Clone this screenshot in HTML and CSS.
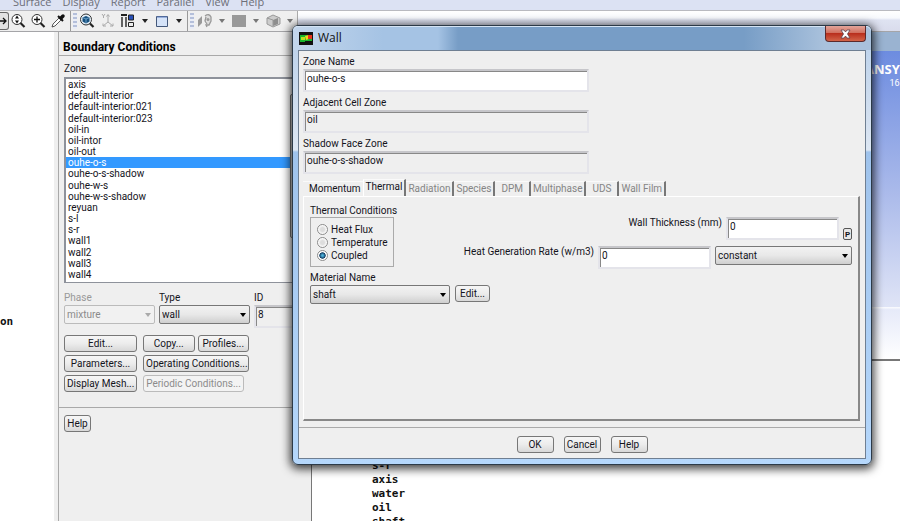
FILE: index.html
```html
<!DOCTYPE html>
<html lang="en">
<head>
    <meta charset="UTF-8">
    <meta name="viewport" content="width=device-width, initial-scale=1.0">
    <title>Boundary Conditions</title>
    <link rel="stylesheet" href="styles.css">
</head>
<body>
    <nav class="menubar">
        <a href="#">Surface</a>
        <a href="#">Display</a>
        <a href="#">Report</a>
        <a href="#">Parallel</a>
        <a href="#">View</a>
        <a href="#">Help</a>
    </nav>

    <div class="toolbar-row">
        <div class="toolbar">
            <button class="tool pan" aria-label="Pan">
                <svg width="8" height="18" viewBox="0 0 8 18"><path d="M0 9h5M3 6l3 3-3 3" fill="none" stroke="#111" stroke-width="1.3"/></svg>
            </button>
            <button class="tool" aria-label="Zoom">
                <svg width="18" height="18" viewBox="0 0 18 18"><circle cx="7" cy="7.500" r="5" fill="#fff" stroke="#333"/><path d="M10.500 11l4 4" stroke="#222" stroke-width="2.200"/><path d="M7 3.500l2 3H5zM7 11.500l2-3H5z" fill="#111"/></svg>
            </button>
            <button class="tool" aria-label="Zoom in">
                <svg width="18" height="18" viewBox="0 0 18 18"><circle cx="7" cy="7.500" r="5" fill="#fff" stroke="#333"/><path d="M10.500 11l4 4" stroke="#222" stroke-width="2.200"/><path d="M4 7.500h6M7 4.500v6" stroke="#111" stroke-width="1.300"/></svg>
            </button>
            <button class="tool" aria-label="Probe">
                <svg width="18" height="18" viewBox="0 0 18 18"><path d="M2 15l1-3 6-6 2 2-6 6z" fill="#fff" stroke="#444" stroke-width=".9"/><path d="M8 4l5 5" stroke="#111" stroke-width="2"/><path d="M11 6l2-2" stroke="#111" stroke-width="3.500" stroke-linecap="round"/></svg>
            </button>
            <span class="sep"></span>
            <span class="grip"></span>
            <button class="tool" aria-label="Fit to window">
                <svg width="18" height="18" viewBox="0 0 18 18"><circle cx="7" cy="7.500" r="5.500" fill="#e4eef6" stroke="#333"/><path d="M11 11.500l3.500 3.500" stroke="#222" stroke-width="2.200"/><path d="M3.500 5.500L7 4l3.500 1.500v4L7 11.500l-3.500-2z" fill="#16507f"/><path d="M3.500 5.500L7 7l3.500-1.500M7 7v4" fill="none" stroke="#8ec3e8" stroke-width=".7"/></svg>
            </button>
            <button class="tool" aria-label="Axes" disabled>
                <svg width="18" height="18" viewBox="0 0 18 18"><path d="M9 10V3M9 10l-5 4M9 10l5 4M7.500 4.500L9 2.500l1.500 2M4 11.500V14h3M14 11.500V14h-3M3 2l1.500 2L6 2M4.500 4v2" fill="none" stroke="#aaa"/></svg>
            </button>
            <button class="tool" aria-label="Layout">
                <svg width="18" height="18" viewBox="0 0 18 18"><path d="M2 3h6" stroke="#222" stroke-width="2"/><path d="M3 5v10M7 5v10" stroke="#333" stroke-width="1.500"/><path d="M9.500 3h5v5h-5z" fill="#2850b8" stroke="#222"/><path d="M9.500 10.500h5v4h-5z" fill="#eee" stroke="#222"/></svg>
            </button>
            <span class="caret"></span>
            <button class="tool" aria-label="Windows">
                <svg width="18" height="18" viewBox="0 0 18 18"><path d="M3.500 4.500h11v10h-11z" fill="#d5e3f8" stroke="#44587a"/><path d="M4 5h10" stroke="#5c7dbd"/></svg>
            </button>
            <span class="caret"></span>
            <span class="sep"></span>
            <span class="grip"></span>
            <button class="tool" aria-label="Render" disabled>
                <svg width="18" height="18" viewBox="0 0 18 18"><path d="M2 8l4-4v7l-4 4z" fill="#999"/><path d="M9 4q4-3 6 1v4l-2 4h-3l1 2M10 5l-1 4 2 3" fill="#ddd" stroke="#999" stroke-width="1.300"/><circle cx="12" cy="7.500" r="1.500" fill="#999"/></svg>
            </button>
            <span class="caret dim"></span>
            <button class="tool" aria-label="Colour" disabled>
                <svg width="18" height="18" viewBox="0 0 18 18"><path d="M2 3h14v12H2z" fill="#999"/></svg>
            </button>
            <span class="caret dim"></span>
            <button class="tool" aria-label="Cube" disabled>
                <svg width="18" height="18" viewBox="0 0 18 18"><path d="M3 6l6-3 7 3v6l-7 3-6-3z" fill="#ccc" stroke="#999"/><path d="M9 8l5-2v6l-5 2z" fill="#8e8e8e"/><path d="M3 6l6 2v6" fill="none" stroke="#999"/></svg>
            </button>
            <span class="caret dim"></span>
        </div>
        <div class="toolbar-rest"></div>
    </div>

    <div class="workspace">
        <aside class="tree">on</aside>

        <section class="panel">
            <h1>Boundary Conditions</h1>
            <div class="panel-body">
                <div class="caption" id="zone-label">Zone</div>
                <div class="listbox">
                    <ul role="listbox" aria-labelledby="zone-label">
                        <li>axis</li>
                        <li>default-interior</li>
                        <li>default-interior:021</li>
                        <li>default-interior:023</li>
                        <li>oil-in</li>
                        <li>oil-intor</li>
                        <li>oil-out</li>
                        <li class="selected">ouhe-o-s</li>
                        <li>ouhe-o-s-shadow</li>
                        <li>ouhe-w-s</li>
                        <li>ouhe-w-s-shadow</li>
                        <li>reyuan</li>
                        <li>s-l</li>
                        <li>s-r</li>
                        <li>wall1</li>
                        <li>wall2</li>
                        <li>wall3</li>
                        <li>wall4</li>
                    </ul>
                    <div class="scrollbar"><div class="thumb"></div></div>
                </div>

                <div class="type-row">
                    <div class="field">
                        <label class="muted" for="phase">Phase</label>
                        <div class="select"><select id="phase" disabled><option>mixture</option></select></div>
                    </div>
                    <div class="field">
                        <label for="type">Type</label>
                        <div class="select"><select id="type"><option>wall</option></select></div>
                    </div>
                    <div class="field">
                        <label for="zone-id">ID</label>
                        <input id="zone-id" type="text" value="8" readonly>
                    </div>
                </div>

                <div class="actions">
                    <button class="btn">Edit...</button>
                    <div class="pair">
                        <button class="btn">Copy...</button>
                        <button class="btn">Profiles...</button>
                    </div>
                    <button class="btn">Parameters...</button>
                    <button class="btn">Operating Conditions...</button>
                    <button class="btn">Display Mesh...</button>
                    <button class="btn periodic" disabled>Periodic Conditions...</button>
                </div>
            </div>
            <div class="panel-foot">
                <button class="btn">Help</button>
            </div>
        </section>

        <main class="output">
            <div class="graphics">
                <div class="graphics-title"></div>
                <div class="viewport">
                    <div class="brand"><b>ANSYS</b><span>16.0</span></div>
                </div>
            </div>
            <pre class="console">s-r
axis
water
oil
shaft</pre>
        </main>
    </div>

    <div class="dialog" role="dialog" aria-labelledby="dialog-title">
        <header class="titlebar">
            <svg class="app-icon" width="14" height="13" viewBox="0 0 14 13"><path d="M0 0h14v13H0z" fill="#111"/><path d="M1 3h12v7H1z" fill="#19b52c"/><path d="M2 5h4v3H2z" fill="#b8e020"/><path d="M6 4l4-1v4l-3 1z" fill="#f0d818"/><path d="M9 3h4v4H9z" fill="#e8351c"/><path d="M6 9h7v1H6z" fill="#111"/></svg>
            <h2 id="dialog-title">Wall</h2>
            <button class="close" aria-label="Close">
                <svg width="11" height="10" viewBox="0 0 11 10"><path d="M1 1h3l1.500 2L7 1h3L7.500 5 10 9H7L5.500 7 4 9H1l2.500-4z" fill="#fff" stroke="#5a4450" stroke-width=".8"/></svg>
            </button>
        </header>

        <div class="dialog-body">
            <div class="names">
                <label for="zone-name">Zone Name</label>
                <input id="zone-name" type="text" value="ouhe-o-s">
                <label for="adjacent">Adjacent Cell Zone</label>
                <input id="adjacent" type="text" value="oil" readonly>
                <label for="shadow">Shadow Face Zone</label>
                <input id="shadow" type="text" value="ouhe-o-s-shadow" readonly>
            </div>

            <div class="tabs" role="tablist">
                <button role="tab">Momentum</button>
                <button role="tab" class="active">Thermal</button>
                <button role="tab" disabled>Radiation</button>
                <button role="tab" disabled>Species</button>
                <button role="tab" class="wide" disabled>DPM</button>
                <button role="tab" disabled>Multiphase</button>
                <button role="tab" class="wide" disabled>UDS</button>
                <button role="tab" disabled>Wall Film</button>
            </div>

            <div class="tab-page">
                <div class="thermal">
                    <fieldset>
                        <legend>Thermal Conditions</legend>
                        <div class="radios">
                            <label><input type="radio" name="thermal">Heat Flux</label>
                            <label><input type="radio" name="thermal">Temperature</label>
                            <label><input type="radio" name="thermal" checked>Coupled</label>
                        </div>
                    </fieldset>
                    <div class="values">
                        <div class="value-row">
                            <label for="thickness">Wall Thickness (mm)</label>
                            <input id="thickness" type="text" value="0">
                            <button class="param" aria-label="Parameter">P</button>
                        </div>
                        <div class="value-row">
                            <label for="heat-rate">Heat Generation Rate (w/m3)</label>
                            <input id="heat-rate" type="text" value="0">
                            <div class="select"><select aria-label="Profile"><option>constant</option></select></div>
                        </div>
                    </div>
                </div>
                <label class="material-label" for="material">Material Name</label>
                <div class="material">
                    <div class="select"><select id="material"><option>shaft</option></select></div>
                    <button class="btn">Edit...</button>
                </div>
            </div>

            <footer>
                <button class="btn">OK</button>
                <button class="btn">Cancel</button>
                <button class="btn">Help</button>
            </footer>
        </div>
    </div>
</body>
</html>
```

FILE: styles.css
```css
* {
    margin: 0;
    padding: 0;
    box-sizing: border-box;
}

body {
    font: 10px/12px Roboto, "DejaVu Sans Condensed", sans-serif;
    color: #14141c;
    background: #efefef;
    height: 100vh;
    display: flex;
    flex-direction: column;
    overflow: hidden;
    position: relative;
}

button,
input,
select {
    font: inherit;
    color: inherit;
}

/* menu and toolbar */
.menubar {
    height: 11px;
    flex: none;
    display: flex;
    align-items: flex-end;
    gap: 11px;
    padding-left: 13px;
    background: #dce2f3;
    border-bottom: 1px solid #b9bac0;
}

.menubar a {
    font: 11px/16px "Open Sans", sans-serif;
    color: #6d6f78;
    text-decoration: none;
}

.toolbar-row {
    display: flex;
    flex: none;
    height: 21px;
    border-bottom: 1px solid #a5a5a8;
}

.toolbar {
    display: flex;
    align-items: center;
    border-right: 1px solid #aaa;
}

.toolbar-rest {
    flex: 1;
    background: linear-gradient(#fff 0, #f7f9fd 7px, #dfe3f2 9px, #d9dcec 100%);
}

.tool {
    width: 20px;
    height: 18px;
    border: none;
    background: none;
    display: flex;
    align-items: center;
    justify-content: center;
}

.pan {
    width: 9px;
    border: 1px solid #666;
    border-left: none;
    border-radius: 0 3px 3px 0;
    background: #e2e2e2;
}

.sep {
    width: 1px;
    height: 20px;
    margin: 0 2px 0 1px;
    background: #999;
}

.grip {
    width: 4px;
    height: 16px;
    margin-right: 1px;
    background: repeating-linear-gradient(#b4bfda 0 2px, #e8ecf6 2px 4px);
}

.caret {
    width: 14px;
    display: flex;
    justify-content: center;
}

.caret::after {
    content: "";
    border: 3px solid transparent;
    border-top: 4px solid #222;
    border-bottom: none;
}

.caret.dim::after {
    border-top-color: #777;
}

/* main areas */
.workspace {
    flex: 1;
    min-height: 0;
    display: flex;
}

.tree {
    width: 54px;
    flex: none;
    padding-top: 283px;
    background: #fff;
    font: bold 11px/14px "DejaVu Sans Mono", monospace;
    color: #111;
}

.panel {
    width: 254px;
    flex: none;
    margin-left: 4px;
    border-left: 1px solid #a9a9a9;
}

.panel h1 {
    padding: 8px 4px 1px;
    border-bottom: 1px solid #a9a9a9;
    font: bold 12px/14px Roboto, Arial, sans-serif;
    color: #000;
}

.panel-body {
    padding: 7px 0 15px 5px;
    border-bottom: 1px solid #a9a9a9;
}

.listbox {
    display: flex;
    height: 206px;
    margin-top: 2px;
    border: 2px solid #8e929b;
    border-right: none;
    border-bottom-width: 1px;
    background: #fff;
}

.listbox ul {
    flex: 1;
    display: flex;
    flex-direction: column;
    padding-bottom: 2px;
    list-style: none;
}

.listbox li {
    flex: 1;
    padding-left: 2px;
    line-height: 11px;
}

.listbox li.selected {
    background: #3399ff;
    color: #fff;
}

.scrollbar {
    width: 22px;
    padding-top: 15px;
    background: #f2f2f2;
}

.thumb {
    height: 144px;
    border: 1px solid #777;
    border-radius: 2px;
    background: #ddd;
}

.type-row {
    display: flex;
    gap: 4px;
    margin-top: 9px;
}

.field {
    width: 91px;
    flex: none;
}

.field label {
    display: block;
    line-height: 12px;
    margin-bottom: 1px;
}

.muted {
    color: #999;
}

input[type="text"] {
    display: block;
    height: 23px;
    padding: 0 2px 5px;
    border: 2px solid #e4e4ea;
    border-top-color: #c6c6ca;
    box-shadow: inset 1px 1px #888;
    background: #fff;
    outline: none;
}

input[type="text"][readonly] {
    background: #efefef;
}

#zone-id {
    width: 100%;
}

.select {
    position: relative;
}

.select select {
    appearance: none;
    display: block;
    width: 100%;
    height: 19px;
    padding: 0 16px 0 2px;
    border: 1px solid #777;
    border-radius: 2px;
    background: linear-gradient(#f2f2f2, #e8e8e8 50%, #cfcfcf);
    outline: none;
}

.select::after {
    content: "";
    position: absolute;
    top: 8px;
    right: 4px;
    border: 3px solid transparent;
    border-top: 4px solid #000;
    border-bottom: none;
    pointer-events: none;
}

.select select:disabled {
    opacity: 1;
    color: #8a8a8a;
    border-color: #bbb;
    background: #f1f1f1;
}

.select:has(select:disabled)::after {
    border-top-color: #aaa;
}

.btn {
    height: 17px;
    padding: 0 2px;
    border: 1px solid #777;
    border-radius: 3px;
    background: linear-gradient(#f6f6f6, #ececec 50%, #d8d8d8);
    line-height: 14px;
    white-space: nowrap;
}

.btn:disabled {
    border-color: #bbb;
    background: #f3f3f3;
    color: #8c8c8c;
}

.actions {
    display: grid;
    grid-template-columns: 73px 106px;
    gap: 3px 6px;
    margin-top: 7px;
}

.pair {
    display: grid;
    grid-template-columns: 1fr 1fr;
    gap: 3px;
}

.periodic {
    margin-right: 5px;
}

.panel-foot {
    padding: 7px 5px;
}

.panel-foot .btn {
    width: 27px;
}

.output {
    flex: 1;
    min-width: 0;
    display: grid;
    grid-template-rows: 33fr 16fr;
}

.graphics {
    min-height: 0;
    display: flex;
    flex-direction: column;
    border-bottom: 2px solid #777;
}

.graphics-title {
    height: 19px;
    background: #9ab3d1;
}

.viewport {
    flex: 1;
    position: relative;
    overflow: hidden;
    background: linear-gradient(#6d8ce0, #a9b9ea 45%, #dfe4f6 83%, #fff 83%, #e6eaf9 84%, #fff);
}

.brand {
    position: absolute;
    top: 9px;
    right: -7px;
    display: flex;
    flex-direction: column;
    align-items: flex-end;
    color: #fff;
    font: 9px/11px Roboto, sans-serif;
}

.brand b {
    font: bold 13px/18px "Open Sans", sans-serif;
}

.console {
    min-height: 0;
    overflow: hidden;
    padding: 98px 0 0 60px;
    border-left: 1px solid #777;
    margin-left: -1px;
    background: #fff;
    font: bold 11px/14px "DejaVu Sans Mono", monospace;
    color: #111;
}

/* wall dialog */
.dialog {
    position: absolute;
    top: 25px;
    left: 292px;
    right: 28px;
    padding: 0 5px 5px;
    border: 1px solid #2c3a48;
    border-radius: 6px;
    background: linear-gradient(#b9d0ea, #d5e1f0 100px, #dde7f3 124px, #9fc3ec 126px, #b5d7fb);
    box-shadow: 0 2px 10px 2px rgba(0, 0, 0, 0.75);
}

.titlebar {
    display: flex;
    align-items: center;
    gap: 5px;
    height: 24px;
    margin: 0 -5px;
    padding: 0 5px 0 6px;
    border-radius: 5px 5px 0 0;
    background: linear-gradient(90deg, #c3d6ec, #a5c3e4 90px, #a5c3e4 145px, #779dc6 165px, #779dc6 78%, #a9c1dc 92%);
    box-shadow: inset 0 1px #d5e4f4;
}

.titlebar h2 {
    flex: 1;
    font: 12px/16px "Open Sans", sans-serif;
    color: #111;
}

.close {
    align-self: flex-start;
    display: flex;
    align-items: center;
    justify-content: center;
    width: 41px;
    height: 16px;
    border: 1px solid #5b2a2c;
    border-top: none;
    border-radius: 0 0 4px 4px;
    background: linear-gradient(#e3a59b, #d1705f 45%, #b92f1d 50%, #d26449);
}

.dialog-body {
    border: 1px solid #6f7f92;
    background: #efefef;
}

.names {
    width: 290px;
    padding: 5px 0 0 4px;
}

.names label {
    display: block;
    line-height: 12px;
    margin-bottom: 1px;
}

.names input {
    width: 100%;
    margin-bottom: 5px;
}

.tabs {
    display: flex;
    align-items: flex-end;
    height: 17px;
    margin-left: 4px;
}

.tabs button {
    height: 15px;
    padding: 0 2px;
    border: none;
    border-right: 2px solid #777;
    border-top: 1px solid #fafafa;
    background: none;
}

.tabs button:disabled {
    color: #858585;
}

.tabs button:first-child {
    padding-left: 6px;
    border-right: none;
}

.tabs button.active {
    height: 17px;
    padding-bottom: 2px;
    border-left: 1px solid #fff;
}

.tabs button.wide {
    padding: 0 6px;
}

.tab-page {
    min-height: 225px;
    margin: 0 5px 0 4px;
    padding: 8px 6px 0;
    border: 1px solid #fff;
    border-right: 2px solid #888;
    border-bottom: 2px solid #888;
}

.thermal {
    display: flex;
    justify-content: space-between;
}

fieldset {
    border: none;
}

.radios {
    width: 84px;
    height: 50px;
    padding: 5px 6px;
    border: 1px solid #aaa;
}

.radios label {
    display: flex;
    align-items: center;
    gap: 3px;
    height: 13px;
}

.radios input {
    appearance: none;
    flex: none;
    width: 11px;
    height: 11px;
    border: 1px solid #8b8b8b;
    border-radius: 50%;
    background: radial-gradient(#ddd 30%, #fff 70%);
}

.radios input:checked {
    background: radial-gradient(#4db4dd 10%, #123d63 45%, #fff 55%);
}

.material-label {
    display: block;
    margin: 3px 0 1px;
}

.material {
    display: flex;
    gap: 5px;
}

.material .select {
    width: 140px;
}

.material .btn {
    width: 35px;
}

.values {
    display: flex;
    flex-direction: column;
    gap: 6px;
    padding-top: 12px;
}

.value-row {
    display: flex;
    justify-content: flex-end;
    gap: 4px;
    white-space: nowrap;
}

.value-row input {
    width: 113px;
}

.value-row .select {
    width: 137px;
}

.param {
    align-self: flex-end;
    width: 9px;
    height: 12px;
    border: 1px solid #555;
    border-radius: 2px;
    background: #e6e6e6;
    font: bold 8px/9px Roboto, sans-serif;
}

footer {
    display: flex;
    justify-content: center;
    gap: 10px;
    height: 31px;
    margin-top: 6px;
    padding-top: 8px;
    border-top: 1px solid #aaa;
}

footer .btn {
    width: 37px;
}
```
